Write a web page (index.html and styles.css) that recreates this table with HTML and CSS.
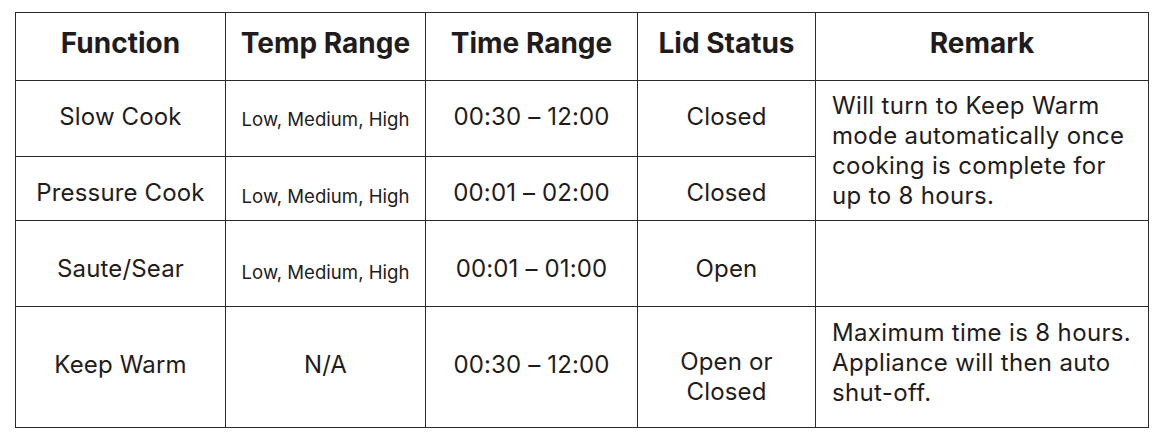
FILE: index.html
```html
<!DOCTYPE html>
<html lang="en">
<head>
<meta charset="utf-8">
<title>Functions</title>
<link rel="stylesheet" href="styles.css">
</head>
<body>
<table class="spec">
  <colgroup>
    <col class="c1"><col class="c2"><col class="c3"><col class="c4"><col class="c5">
  </colgroup>
  <thead>
    <tr class="r-head">
      <th>Function</th>
      <th>Temp Range</th>
      <th>Time Range</th>
      <th>Lid Status</th>
      <th>Remark</th>
    </tr>
  </thead>
  <tbody>
    <tr class="r1">
      <td class="cell">Slow Cook</td>
      <td class="cell small">Low, Medium, High</td>
      <td class="cell">00:30 – 12:00</td>
      <td class="cell">Closed</td>
      <td class="remark" rowspan="2">Will turn to Keep Warm mode automatically once cooking is complete for up to 8 hours.</td>
    </tr>
    <tr class="r2">
      <td class="cell">Pressure Cook</td>
      <td class="cell small">Low, Medium, High</td>
      <td class="cell">00:01 – 02:00</td>
      <td class="cell">Closed</td>
    </tr>
    <tr class="r3">
      <td class="cell">Saute/Sear</td>
      <td class="cell small">Low, Medium, High</td>
      <td class="cell">00:01 – 01:00</td>
      <td class="cell">Open</td>
      <td class="remark"></td>
    </tr>
    <tr class="r4">
      <td class="cell">Keep Warm</td>
      <td class="cell">N/A</td>
      <td class="cell">00:30 – 12:00</td>
      <td class="lid-two">Open or<br>Closed</td>
      <td class="remark">Maximum time is 8 hours. Appliance will then auto shut-off.</td>
    </tr>
  </tbody>
</table>
</body>
</html>
```

FILE: styles.css
```css
html, body {
  margin: 0;
  padding: 0;
  background: #ffffff;
}

body {
  padding: 12px 0 0 15px;
  font-family: Inter, "Noto Sans", "Liberation Sans", sans-serif;
  color: #1f1c1d;
}

.spec {
  border-collapse: collapse;
  table-layout: fixed;
  width: 1133px;
}

.c1 { width: 210px; }
.c2 { width: 200px; }
.c3 { width: 212px; }
.c4 { width: 178px; }
.c5 { width: 333px; }

.spec th,
.spec td {
  border: 1.3px solid #2b2b2b;
  text-align: center;
  vertical-align: middle;
  padding: 0;
  font-size: 24px;
  font-weight: 400;
  line-height: 30px;
  letter-spacing: 0.15px;
}

.spec th {
  font-size: 28px;
  font-weight: 700;
  letter-spacing: 0;
  padding-bottom: 8px;
}

.r-head { height: 68px; }
.r1 { height: 76px; }
.r2 { height: 64px; }
.r3 { height: 86px; }
.r4 { height: 121px; }

.r1 .cell { padding-bottom: 4px; }
.r2 .cell { padding-top: 8px; }
.r3 .cell { padding-top: 10px; }
.r4 .cell { padding-bottom: 4px; }

.spec td.small {
  font-size: 18.6px;
  letter-spacing: 0;
}

.r1 .cell.small { padding-bottom: 0; }
.r2 .cell.small { padding-top: 14px; }
.r3 .cell.small { padding-top: 16px; }

.spec td.remark {
  text-align: left;
  padding: 0 16px;
  letter-spacing: 0.35px;
}

.r4 td.remark {
  padding-bottom: 9px;
}

.spec td.lid-two {
  padding-top: 20px;
}
```
